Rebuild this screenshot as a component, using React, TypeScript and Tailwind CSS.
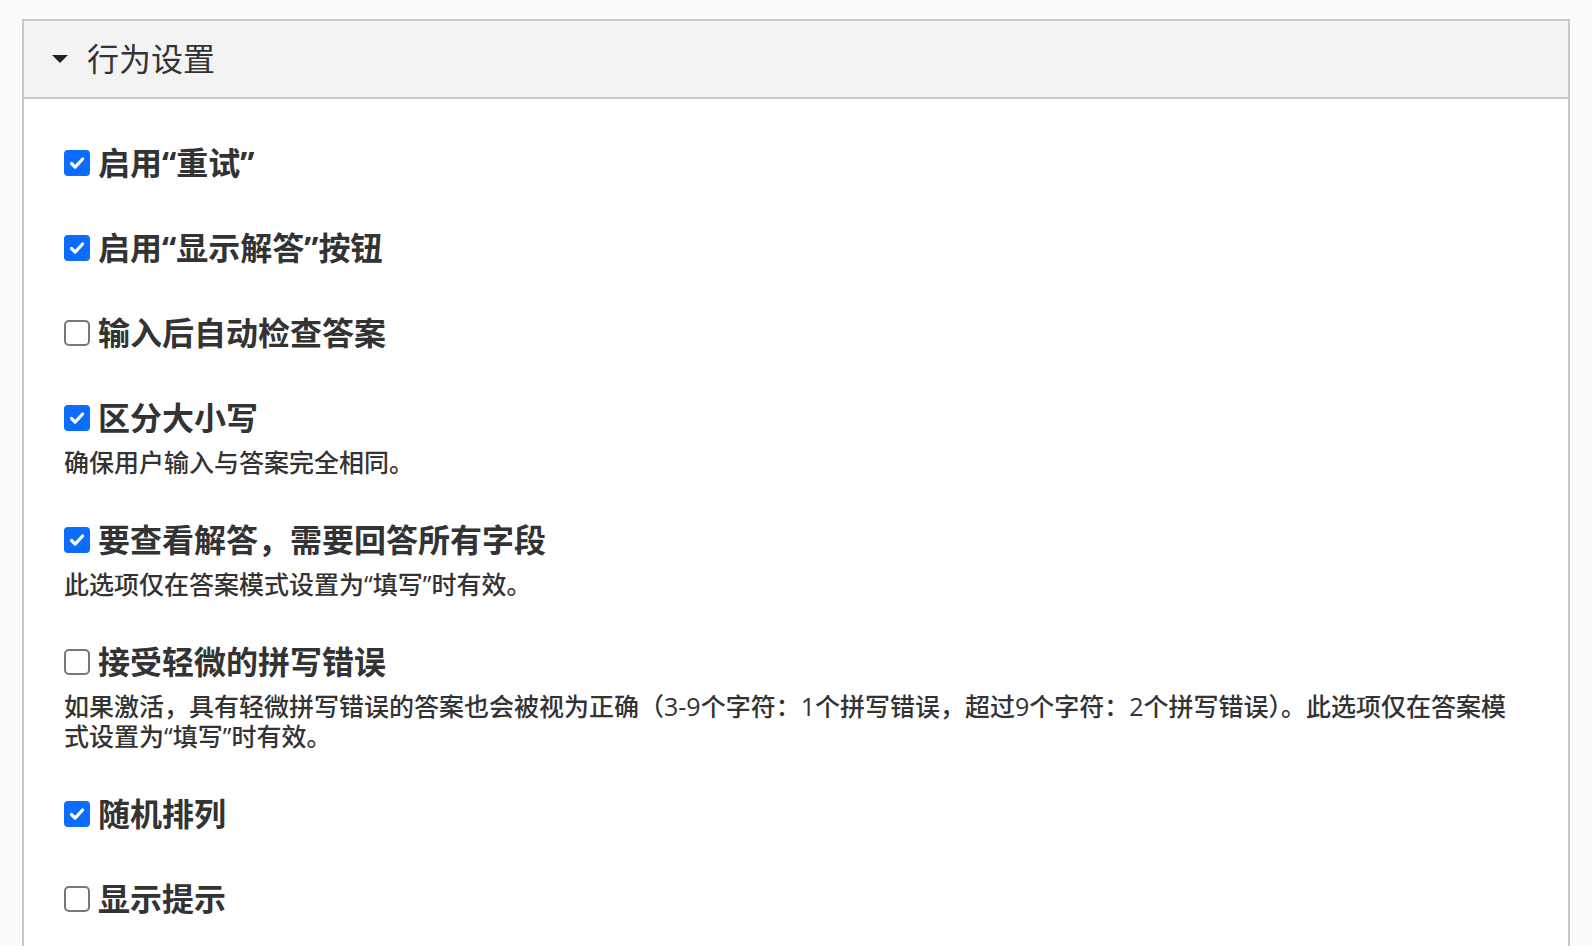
import React from "react";

type Option = {
  label: string;
  checked: boolean;
  desc?: string;
};

const options: Option[] = [
  { label: "启用“重试”", checked: true },
  { label: "启用“显示解答”按钮", checked: true },
  { label: "输入后自动检查答案", checked: false },
  { label: "区分大小写", checked: true, desc: "确保用户输入与答案完全相同。" },
  {
    label: "要查看解答，需要回答所有字段",
    checked: true,
    desc: "此选项仅在答案模式设置为“填写”时有效。",
  },
  {
    label: "接受轻微的拼写错误",
    checked: false,
    desc: "如果激活，具有轻微拼写错误的答案也会被视为正确（3-9个字符：1个拼写错误，超过9个字符：2个拼写错误）。此选项仅在答案模式设置为“填写”时有效。",
  },
  { label: "随机排列", checked: true },
  { label: "显示提示", checked: false },
];

const Checkbox = ({ checked }: { checked: boolean }) =>
  checked ? (
    <span className="flex h-[26px] w-[26px] shrink-0 items-center justify-center rounded-[4px] bg-[#0b6cfd]">
      <svg width="18" height="18" viewBox="0 0 18 18" fill="none">
        <path
          d="M3.5 9.5l3.6 3.6L14.6 5"
          stroke="#fff"
          strokeWidth="3.2"
          strokeLinecap="round"
          strokeLinejoin="round"
        />
      </svg>
    </span>
  ) : (
    <span className="block h-[26px] w-[26px] shrink-0 rounded-[5px] border-2 border-[#777] bg-white" />
  );

const App = () => {
  return (
    <div
      className="min-h-screen bg-[#fbfbfb] px-[22px] pt-[19px] text-[#333]"
      style={{ fontFamily: '"Open Sans", "Noto Sans CJK SC", sans-serif' }}
    >
      <div className="border-2 border-[#c9c9c9] bg-white">
        <div className="flex h-[78px] items-center gap-[19px] border-b-2 border-[#c9c9c9] bg-[#f3f3f3] pl-[28px]">
          <svg width="16" height="8" viewBox="0 0 16 8">
            <path d="M0 0h16L8 8z" fill="#222" />
          </svg>
          <h2 className="text-[32px] font-normal leading-none text-[#333]">行为设置</h2>
        </div>
        <div className="flex flex-col gap-[40px] pl-[40px] pr-[40px] pt-[41px] pb-[40px]">
          {options.map((o) => (
            <div key={o.label}>
              <label className="flex h-[45px] items-center gap-[8px]">
                <Checkbox checked={o.checked} />
                <span className="text-[32px] font-bold leading-[45px] text-[#333]">{o.label}</span>
              </label>
              {o.desc && (
                <p className="mt-[7px] text-[25px] font-medium leading-[30px] text-[#333]">{o.desc}</p>
              )}
            </div>
          ))}
        </div>
      </div>
    </div>
  );
};

export default App;
